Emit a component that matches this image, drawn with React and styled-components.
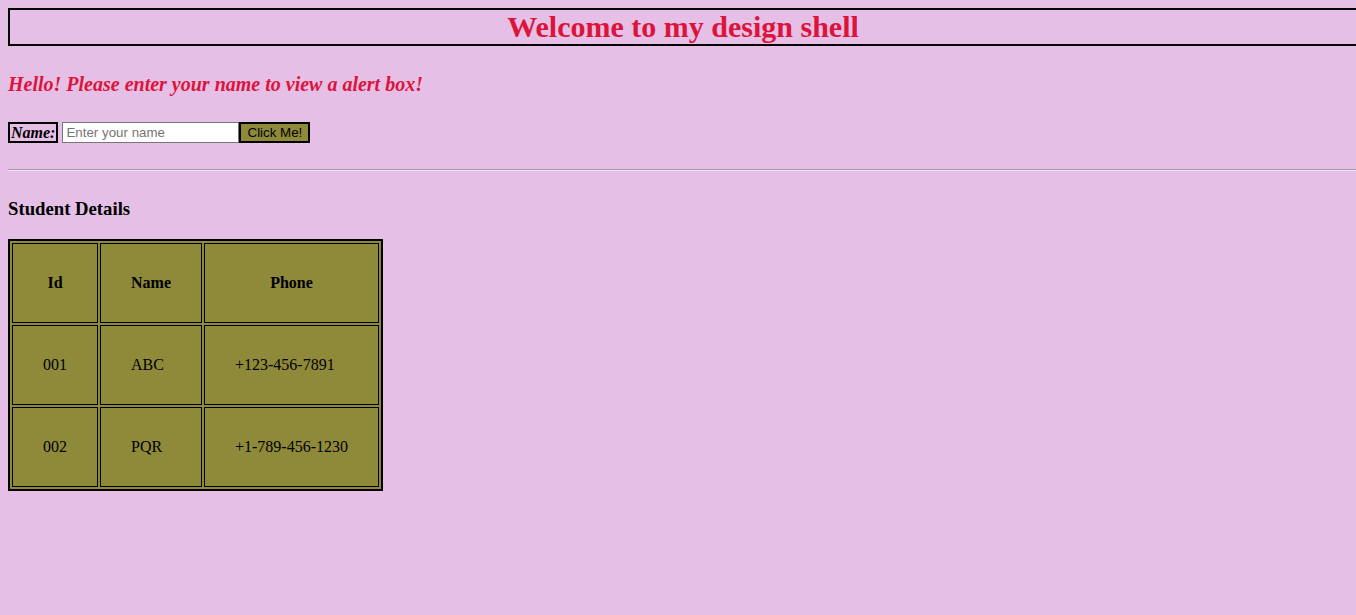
import React from 'react';
import styled, { createGlobalStyle } from 'styled-components';

const olive = '#8f8a3a';
const crimson = '#dc143c';

const Global = createGlobalStyle`
  html, body {
    margin: 0;
    background: #e5bfe6;
    overflow: hidden;
  }
  body {
    padding: 8px;
    font-family: "Liberation Serif", "Times New Roman", serif;
    color: #000;
  }
`;

const Page = styled.div`
  width: 1340px;
`;

const Title = styled.h1`
  box-sizing: border-box;
  width: 1350px;
  margin: 0;
  border: 2px solid #000;
  color: ${crimson};
  font-size: 30px;
  line-height: 34px;
  text-align: center;
`;

const Greeting = styled.h3`
  margin: 27px 0 0;
  color: ${crimson};
  font-size: 20px;
  font-style: italic;
  line-height: 23px;
`;

const Form = styled.div`
  display: flex;
  align-items: stretch;
  margin-top: 26px;
  height: 21px;
`;

const Label = styled.label`
  border: 2px solid #000;
  font-weight: bold;
  font-style: italic;
  font-size: 16px;
  line-height: 17px;
  padding: 0 1px;
  margin-right: 4px;
`;

const Input = styled.input`
  box-sizing: border-box;
  width: 177px;
  height: 21px;
  margin: 0;
  border: 1px solid #767676;
  padding: 1px 3px;
  font-family: "Liberation Sans", Arial, sans-serif;
  font-size: 13.33px;
  background: #fff;
  &::placeholder { color: #757575; }
`;

const Button = styled.button`
  box-sizing: border-box;
  height: 21px;
  width: 71px;
  margin: 0;
  border: 2px solid #000;
  background: ${olive};
  font-family: "Liberation Sans", Arial, sans-serif;
  font-size: 13.33px;
  color: #000;
  padding: 0;
`;

const Rule = styled.hr`
  width: 1348px;
  margin: 26px 0 0;
  border: none;
  border-top: 1px solid #a59aa6;
  border-bottom: 1px solid #f2e0f2;
`;

const Heading = styled.h3`
  margin: 28px 0 0;
  font-size: 18.72px;
  line-height: 20px;
`;

const Table = styled.table`
  margin-top: 20px;
  border: 2px solid #000;
  border-spacing: 2px;
  background: ${olive};
`;

const Th = styled.th`
  border: 1px solid #000;
  padding: 29px 30px;
  height: 20px;
  font-size: 16px;
`;

const Td = styled.td`
  border: 1px solid #000;
  padding: 29px 30px;
  height: 20px;
  font-size: 16px;
  text-align: left;
`;

const students = [
  { id: '001', name: 'ABC', phone: '+123-456-7891' },
  { id: '002', name: 'PQR', phone: '+1-789-456-1230' },
];

export default function App() {
  return (
    <Page>
      <Global />
      <Title>Welcome to my design shell</Title>
      <Greeting>Hello! Please enter your name to view a alert box!</Greeting>
      <Form>
        <Label>Name:</Label>
        <Input placeholder="Enter your name" />
        <Button>Click Me!</Button>
      </Form>
      <Rule />
      <Heading>Student Details</Heading>
      <Table>
        <thead>
          <tr>
            <Th>Id</Th>
            <Th>Name</Th>
            <Th>Phone</Th>
          </tr>
        </thead>
        <tbody>
          {students.map((s) => (
            <tr key={s.id}>
              <Td>{s.id}</Td>
              <Td>{s.name}</Td>
              <Td>{s.phone}</Td>
            </tr>
          ))}
        </tbody>
      </Table>
    </Page>
  );
}
